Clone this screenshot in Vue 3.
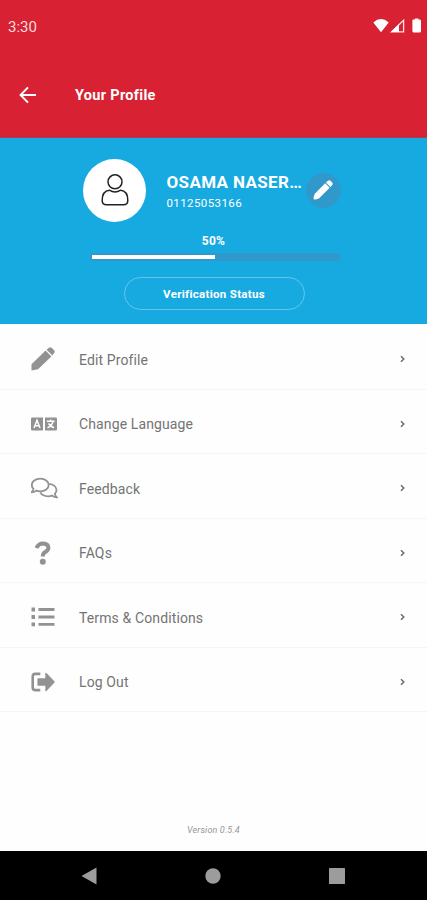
<template>
  <div class="screen">
    <header class="top">
      <div class="status-bar">
        <span class="time">3:30</span>
        <svg class="status-icons" width="48" height="16" viewBox="0 0 48 16">
          <path d="M0.3 4.4Q8 -2.2 15.7 4.4L8 14.2Z" fill="#fff" />
          <path d="M30.6 2.2V13.8H18.6Z" fill="none" stroke="#fde3e3" stroke-width="1.3" />
          <path d="M26 6V14H18Z" fill="#fff" />
          <path d="M40 1.5h2V0.6h3.4v0.9h1.2q1.4 0 1.4 1.4v10q0 1.5-1.5 1.5h-5.6q-1.5 0-1.5-1.5v-10q0-1.4 0.6-1.4Z" fill="#fff" />
        </svg>
      </div>
      <div class="app-bar">
        <svg class="back" width="18" height="18" viewBox="0 0 18 18">
          <path d="M9 1.4L1.6 9L9 16.6M1.8 9H17" fill="none" stroke="#fff" stroke-width="2" />
        </svg>
        <h1>Your Profile</h1>
      </div>
    </header>

    <section class="profile">
      <div class="user">
        <div class="avatar">
          <svg width="28" height="34" viewBox="0 0 28 34" fill="none" stroke="#222" stroke-width="1.5">
            <circle cx="14" cy="8.8" r="7" />
            <path d="M8.4 17.2Q14 20.8 19.6 17.2C25 17.6 26.8 22 26.8 27.5Q26.8 31.8 22.5 31.8H5.5Q1.2 31.8 1.2 27.5C1.2 22 3 17.6 8.4 17.2Z" />
          </svg>
        </div>
        <div class="who">
          <div class="name">OSAMA NASER…</div>
          <div class="phone">01125053166</div>
        </div>
        <button class="edit">
          <svg width="20" height="20" viewBox="0 0 24 24" fill="#fff">
            <path d="M14.6 4L20 9.4L7.4 21.8Q4 23.6 0.8 23.2Q0.4 20 2.2 16.6Z" />
            <path d="M15.5 3.1L18 0.9Q19.6-0.2 21 1L23.2 3.2Q24.2 4.6 23.1 6L20.9 8.5Z" />
          </svg>
        </button>
      </div>
      <div class="percent">{{ progress }}%</div>
      <div class="track">
        <div class="fill" :style="{ width: progress + '%' }"></div>
      </div>
      <button class="verify">Verification Status</button>
    </section>

    <ul class="menu">
      <li v-for="item in items" :key="item.icon">
        <span class="icon">
          <svg v-if="item.icon === 'pencil'" width="24" height="24" viewBox="0 0 24 24">
            <path d="M14.6 3.6L20.4 9.4L7 22.3L0.5 23.6V17.3Z" />
            <path d="M15.6 2.7L17.9 0.8Q19.4-0.3 20.8 0.9L23.1 3.2Q24.3 4.6 23.1 6L21.3 8.4Z" />
          </svg>
          <svg v-else-if="item.icon === 'language'" width="26" height="14" viewBox="0 0 26 14">
            <path d="M1 0.5H12V13.5H1Q0 13.5 0 12.5V1.5Q0 0.5 1 0.5ZM14 0.5H25Q26 0.5 26 1.5V12.5Q26 13.5 25 13.5H14Z" />
            <path class="cut" d="M3 11L6 3.3L9 11M4.2 8.7H7.8M15.8 4.3H23.6M19.6 2.6V4.3M22 4.5Q21 8.5 16.5 10.8M17.5 6.5Q19.5 9.5 23 10.8" />
          </svg>
          <svg v-else-if="item.icon === 'chat'" class="line" width="27" height="22" viewBox="0.7 0 27 22">
            <path d="M10 1.7C14.8 1.7 18.4 4.5 18.4 8S14.8 14.3 10 14.3C8.5 14.3 7.1 14.1 5.9 13.6C4.6 14.6 2.9 15.3 1.2 15.3C2.3 14.2 3 13 3.2 11.8C2 10.7 1.5 9.4 1.5 8C1.5 4.5 5.2 1.7 10 1.7Z" />
            <path d="M18.9 6.8C23 7.2 26.2 9.8 26.2 13C26.2 14.4 25.6 15.7 24.5 16.8C24.7 18 25.4 19.2 26.5 20.3C24.8 20.3 23.1 19.6 21.8 18.6C20.6 19.1 19.3 19.3 17.8 19.3C14.3 19.3 11.3 17.7 10 15.4" />
          </svg>
          <svg v-else-if="item.icon === 'question'" width="18" height="24" viewBox="0 0 18 24">
            <path class="hook" d="M2.4 7Q4.5 2.5 9 2.5Q14.4 2.8 14.4 7Q14.4 9.2 11.3 11Q8.8 12.4 8.8 15.4" />
            <circle cx="8.8" cy="20.8" r="3" />
          </svg>
          <svg v-else-if="item.icon === 'list'" width="24" height="20" viewBox="0 0 24 20">
            <path d="M0.5 0.6H4V4.4H0.5ZM0.5 8.1H4V11.9H0.5ZM0.5 15.4H4V19.2H0.5ZM7.5 1.1H23.5V3.9H7.5ZM7.5 8.6H23.5V11.4H7.5ZM7.5 15.9H23.5V18.7H7.5Z" />
          </svg>
          <svg v-else width="24" height="20" viewBox="0 0 24 20">
            <path class="door" d="M9.3 1.9H4.4Q1.7 1.9 1.7 4.6V15.4Q1.7 18.1 4.4 18.1H9.3" />
            <path d="M7.3 6.3H14.3V1.8Q14.3 0.2 15.7 1.3L23.3 9.2Q24.1 10 23.3 10.8L15.7 18.7Q14.3 19.8 14.3 18.2V13.7H7.3Q6.4 13.7 6.4 12.8V7.2Q6.4 6.3 7.3 6.3Z" />
          </svg>
        </span>
        <span class="label">{{ item.label }}</span>
        <svg class="chevron" width="5" height="8" viewBox="0 0 5 8">
          <path d="M1 1.2L3.8 4L1 6.8" fill="none" stroke="#666" stroke-width="1.4" />
        </svg>
      </li>
    </ul>

    <div class="version">Version 0.5.4</div>

    <nav class="nav-bar">
      <svg width="16" height="18" viewBox="0 0 16 18"><path d="M0.5 9L15.5 0.5V17.5Z" /></svg>
      <svg width="16" height="16" viewBox="0 0 16 16"><circle cx="8" cy="8" r="7.7" /></svg>
      <svg width="16" height="16" viewBox="0 0 16 16"><rect width="16" height="16" rx="0.6" /></svg>
    </nav>
  </div>
</template>

<script setup>
import { ref } from "vue";

const progress = ref(50);

const items = [
  { icon: "pencil", label: "Edit Profile" },
  { icon: "language", label: "Change Language" },
  { icon: "chat", label: "Feedback" },
  { icon: "question", label: "FAQs" },
  { icon: "list", label: "Terms & Conditions" },
  { icon: "logout", label: "Log Out" },
];
</script>

<style>
body {
  background: #fff;
}
</style>

<style scoped>
.screen {
  display: flex;
  flex-direction: column;
  height: 900px;
  overflow: hidden;
  background: #fefefe;
  font-family: Roboto, sans-serif;
}

svg {
  display: block;
  flex: none;
}

.top {
  height: 138px;
  box-sizing: border-box;
  background: #d82132;
  border-bottom: 1px solid #a6405a;
  color: #fff;
}

.status-bar {
  display: flex;
  justify-content: space-between;
  height: 53px;
  padding: 0 6px 0 8px;
}

.time {
  line-height: 54px;
  font-size: 15px;
  color: #fbdcdc;
}

.status-icons {
  margin-top: 18px;
}

.app-bar {
  display: flex;
  align-items: center;
  height: 84px;
  padding-left: 19px;
}

h1 {
  margin: 1px 0 0 38px;
  font-size: 14.5px;
  font-weight: 700;
  letter-spacing: 0.3px;
}

.profile {
  display: flex;
  flex-direction: column;
  align-items: center;
  height: 186px;
  background: #17aae1;
  color: #fff;
}

.user {
  display: flex;
  align-items: center;
  width: 258px;
  height: 64px;
  margin: 20px 0 0 -3px;
}

.avatar {
  display: flex;
  align-items: center;
  justify-content: center;
  width: 63px;
  height: 63px;
  border-radius: 50%;
  background: #fff;
}

.who {
  width: 139px;
  margin: 3px 0 0 20.5px;
  white-space: nowrap;
}

.name {
  font-size: 17px;
  font-weight: 700;
  line-height: 22px;
  letter-spacing: 0.35px;
}

.phone {
  font-size: 11.5px;
  line-height: 20px;
  letter-spacing: 0.4px;
}

button {
  padding: 0;
  font-family: inherit;
  color: #fff;
}

.edit {
  display: flex;
  flex: none;
  align-items: center;
  justify-content: center;
  width: 35px;
  height: 35px;
  border: none;
  border-radius: 50%;
  background: #3198cb;
}

.percent {
  margin-top: 11px;
  font-size: 12px;
  font-weight: 700;
  line-height: 16px;
  letter-spacing: 0.3px;
}

.track {
  width: 246px;
  height: 4px;
  margin: 4px 0 0 3px;
  padding: 2px;
  border-radius: 2px;
  background: #3198cb;
}

.fill {
  height: 4px;
  background: #fff;
}

.verify {
  width: 181px;
  height: 33px;
  margin: 16px 0 0 1px;
  border: 1px solid #65c6ec;
  border-radius: 17px;
  background: transparent;
  font-size: 11.5px;
  font-weight: 700;
  letter-spacing: 0.3px;
}

.menu {
  margin: 0;
  padding: 1px 0 0;
  list-style: none;
}

.menu li {
  display: flex;
  align-items: center;
  box-sizing: border-box;
  height: 64.5px;
  padding: 5px 22px 0 31px;
  border-bottom: 1px solid #f6f6f6;
}

.icon {
  width: 48px;
  fill: #929292;
}

.icon .line,
.hook,
.door {
  fill: none;
  stroke: #929292;
}

.icon .line {
  stroke-width: 1.8;
}

.hook {
  stroke-width: 4;
}

.door {
  stroke-width: 2.6;
}

.cut {
  fill: none;
  stroke: #fff;
  stroke-width: 1.5;
}

.icon svg[width="18"] {
  margin-left: 3px;
}

.label {
  flex: 1;
  padding-top: 1px;
  font-size: 14px;
  letter-spacing: 0.12px;
  color: #747474;
}

.version {
  margin-top: auto;
  padding-bottom: 14px;
  text-align: center;
  font-size: 9px;
  font-style: italic;
  line-height: 14px;
  letter-spacing: 0.15px;
  color: #969696;
}

.nav-bar {
  display: flex;
  align-items: center;
  justify-content: space-between;
  box-sizing: border-box;
  height: 49px;
  padding: 0 82px 0 81px;
  background: #000;
  fill: #9c9c9c;
}
</style>
